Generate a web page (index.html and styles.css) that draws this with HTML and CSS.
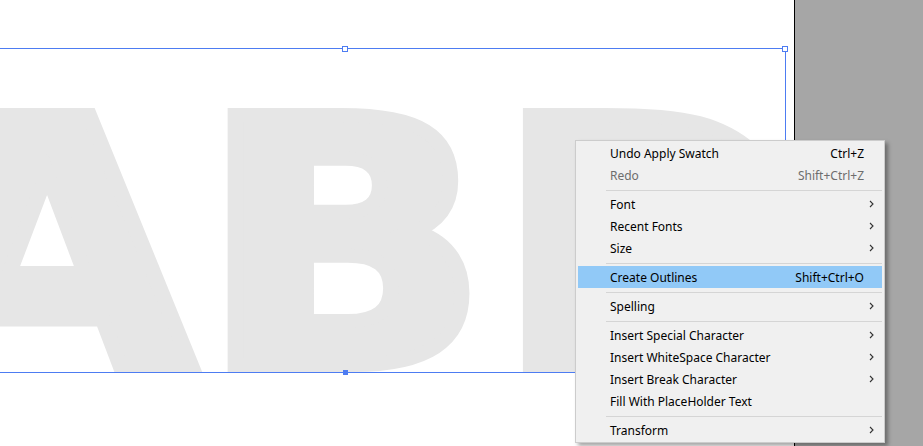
FILE: index.html
```html
<!DOCTYPE html>
<html>
<head>
    <meta charset="UTF-8">
    <title>Create Outlines</title>
    <link rel="stylesheet" href="styles.css">
</head>
<body>
    <div class="workspace">
        <div class="artboard">
            <div class="frame">
                <div class="glyphs">ABD</div>
                <span class="handle handle-top-mid"></span>
                <span class="handle handle-top-right"></span>
                <span class="handle handle-bottom-mid"></span>
            </div>
        </div>
        <div class="pasteboard"></div>

        <ul class="menu">
            <li class="item"><span class="label">Undo Apply Swatch</span><span class="shortcut">Ctrl+Z</span><span class="arrow"></span></li>
            <li class="item disabled"><span class="label">Redo</span><span class="shortcut">Shift+Ctrl+Z</span><span class="arrow"></span></li>
            <li class="separator"></li>
            <li class="item"><span class="label">Font</span><span class="arrow"><svg width="5" height="8" viewBox="0 0 5 8"><path d="M1 1 L4 4 L1 7" fill="none" stroke="#333" stroke-width="1.1"/></svg></span></li>
            <li class="item"><span class="label">Recent Fonts</span><span class="arrow"><svg width="5" height="8" viewBox="0 0 5 8"><path d="M1 1 L4 4 L1 7" fill="none" stroke="#333" stroke-width="1.1"/></svg></span></li>
            <li class="item"><span class="label">Size</span><span class="arrow"><svg width="5" height="8" viewBox="0 0 5 8"><path d="M1 1 L4 4 L1 7" fill="none" stroke="#333" stroke-width="1.1"/></svg></span></li>
            <li class="separator"></li>
            <li class="item active"><span class="label">Create Outlines</span><span class="shortcut">Shift+Ctrl+O</span><span class="arrow"></span></li>
            <li class="separator"></li>
            <li class="item"><span class="label">Spelling</span><span class="arrow"><svg width="5" height="8" viewBox="0 0 5 8"><path d="M1 1 L4 4 L1 7" fill="none" stroke="#333" stroke-width="1.1"/></svg></span></li>
            <li class="separator"></li>
            <li class="item"><span class="label">Insert Special Character</span><span class="arrow"><svg width="5" height="8" viewBox="0 0 5 8"><path d="M1 1 L4 4 L1 7" fill="none" stroke="#333" stroke-width="1.1"/></svg></span></li>
            <li class="item"><span class="label">Insert WhiteSpace Character</span><span class="arrow"><svg width="5" height="8" viewBox="0 0 5 8"><path d="M1 1 L4 4 L1 7" fill="none" stroke="#333" stroke-width="1.1"/></svg></span></li>
            <li class="item"><span class="label">Insert Break Character</span><span class="arrow"><svg width="5" height="8" viewBox="0 0 5 8"><path d="M1 1 L4 4 L1 7" fill="none" stroke="#333" stroke-width="1.1"/></svg></span></li>
            <li class="item"><span class="label">Fill With PlaceHolder Text</span><span class="arrow"></span></li>
            <li class="separator"></li>
            <li class="item"><span class="label">Transform</span><span class="arrow"><svg width="5" height="8" viewBox="0 0 5 8"><path d="M1 1 L4 4 L1 7" fill="none" stroke="#333" stroke-width="1.1"/></svg></span></li>
        </ul>
    </div>
</body>
</html>
```

FILE: styles.css
```css
* {
    margin: 0;
    padding: 0;
    box-sizing: border-box;
}

body {
    width: 923px;
    height: 446px;
    overflow: hidden;
    background: #a6a6a6;
    font-family: 'Noto Sans', 'Liberation Sans', Arial, sans-serif;
}

.workspace {
    display: flex;
    width: 923px;
    height: 446px;
    position: relative;
}

.artboard {
    width: 795px;
    height: 100%;
    background: #ffffff;
    border-right: 1px solid #000000;
    position: relative;
    overflow: hidden;
}

.pasteboard {
    flex: 1;
    background: #a6a6a6;
}

/* text frame with selection */
.frame {
    position: absolute;
    left: -20px;
    top: 48px;
    width: 806px;
    height: 325px;
    border: 1px solid #4d7cf2;
}

.glyphs {
    position: absolute;
    left: -80px;
    top: 26px;
    font-family: 'DejaVu Sans', sans-serif;
    font-weight: bold;
    font-size: 343px;
    line-height: 1;
    letter-spacing: 7px;
    color: #e6e6e6;
    -webkit-text-stroke: 14px #e6e6e6;
    transform: scaleX(1.1);
    transform-origin: left top;
    white-space: nowrap;
}

.handle {
    position: absolute;
    width: 6px;
    height: 6px;
    background: #ffffff;
    border: 1px solid #4d7cf2;
}

.handle-top-mid {
    left: 361px;
    top: -3px;
}

.handle-top-right {
    right: -3px;
    top: -3px;
}

.handle-bottom-mid {
    left: 362px;
    bottom: -3px;
    width: 5px;
    height: 5px;
    background: #4d7cf2;
}

/* context menu */
.menu {
    position: absolute;
    left: 575px;
    top: 140px;
    width: 310px;
    list-style: none;
    background: #f0f0f0;
    border: 1px solid #cccccc;
    padding: 1px 2px;
    box-shadow: 3px 3px 4px rgba(0, 0, 0, 0.35);
    font-size: 12px;
    color: #000000;
}

.item {
    display: flex;
    align-items: center;
    height: 22px;
    padding-left: 32px;
}

.item.active {
    background: #91c9f7;
}

.item.disabled {
    color: #6d6d6d;
}

.label {
    flex: 1;
}

.shortcut {
    text-align: right;
}

.arrow {
    width: 18px;
    display: flex;
    justify-content: flex-end;
    padding-right: 8px;
}

.separator {
    height: 1px;
    margin: 4px 0 2px 28px;
    background: #d5d5d5;
}
```
